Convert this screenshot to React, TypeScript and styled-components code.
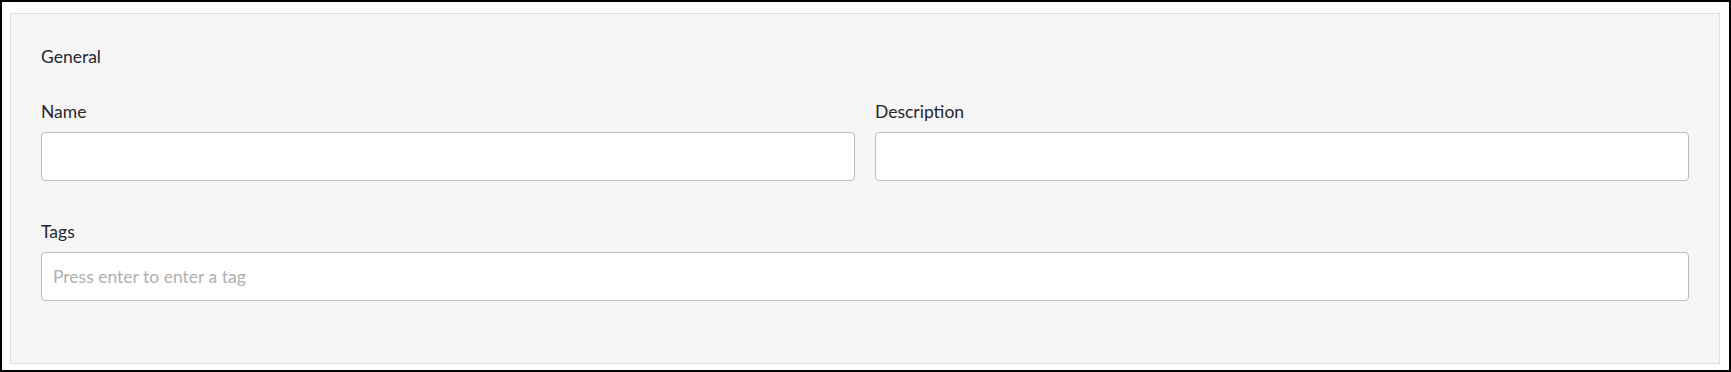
import React from "react";
import styled, { createGlobalStyle } from "styled-components";

const GlobalStyle = createGlobalStyle`
  html, body {
    margin: 0;
    padding: 0;
    background: #ffffff;
  }
  * { box-sizing: border-box; }
  body {
    font-family: Lato, "Open Sans", "Liberation Sans", sans-serif;
    color: #24282d;
  }
`;

const Frame = styled.div`
  width: 1731px;
  height: 372px;
  border: 2px solid #000;
  padding: 11px 9px 6px 8px;
  background: #fff;
`;

const Panel = styled.section`
  border: 1px solid #dedede;
  background: #f6f6f6;
  padding: 30px 30px 62px 30px;
`;

const Heading = styled.div`
  font-size: 17.5px;
  line-height: 26px;
  margin-bottom: 29px;
`;

const Row = styled.div<{ $cols?: number }>`
  display: grid;
  grid-template-columns: repeat(${(p) => p.$cols ?? 1}, 1fr);
  column-gap: 20px;
  margin-bottom: ${(p) => (p.$cols === 2 ? "38px" : "0")};
`;

const Field = styled.div`
  display: flex;
  flex-direction: column;
`;

const Label = styled.label`
  font-size: 17.5px;
  line-height: 26px;
  margin-bottom: 7px;
`;

const Input = styled.input`
  height: 49px;
  width: 100%;
  border: 1px solid #bdbdbd;
  border-radius: 4px;
  background: #fff;
  padding: 0 11px;
  font-family: Lato, "Open Sans", "Liberation Sans", sans-serif;
  font-size: 17.5px;
  color: #24282d;
  outline: none;
  &::placeholder {
    color: #b0b0b0;
  }
`;

export default function App() {
  return (
    <>
      <GlobalStyle />
      <Frame>
        <Panel>
          <Heading>General</Heading>
          <Row $cols={2}>
            <Field>
              <Label>Name</Label>
              <Input type="text" />
            </Field>
            <Field>
              <Label>Description</Label>
              <Input type="text" />
            </Field>
          </Row>
          <Row $cols={1}>
            <Field>
              <Label>Tags</Label>
              <Input type="text" placeholder="Press enter to enter a tag" />
            </Field>
          </Row>
        </Panel>
      </Frame>
    </>
  );
}
